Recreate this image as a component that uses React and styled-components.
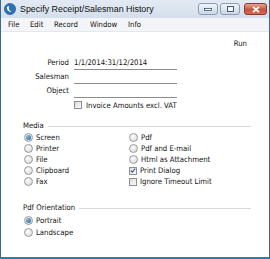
import React from 'react';
import styled, { createGlobalStyle, css } from 'styled-components';

const GlobalStyle = createGlobalStyle`
  html, body { margin: 0; padding: 0; background: #fff; }
  body { font-family: "DejaVu Sans Condensed", "DejaVu Sans", sans-serif; }
`;

const Window = styled.div`
  width: 270px;
  height: 259px;
  box-sizing: border-box;
  display: flex;
  flex-direction: column;
  border: 1px solid #3a6b8c;
  border-top: none;
  border-bottom: 2px solid #2c7fa5;
  background: #fff;
  overflow: hidden;
`;

const TitleBar = styled.div`
  height: 18px;
  display: flex;
  align-items: center;
  padding: 0 2px 0 3px;
  background: linear-gradient(#e3eaf3, #d4dfec);
`;

const Title = styled.div`
  flex: 1;
  margin-left: 4px;
  font-family: "Liberation Sans", sans-serif;
  font-size: 8.9px;
  color: #111;
  white-space: nowrap;
`;

const WinButton = styled.div`
  width: ${(p) => p.w}px;
  height: 12px;
  margin-left: ${(p) => p.gap}px;
  box-sizing: border-box;
  border: 1px solid #8a9db3;
  border-radius: 3px;
  display: flex;
  align-items: center;
  justify-content: center;
  background: linear-gradient(#eef3f9, #cbd8e7);
  ${(p) => p.close && css`
    border-color: #8b3a2e;
    background: linear-gradient(#e8a496, #c8553f 55%, #d06a52);
  `}
`;

const MenuBar = styled.div`
  height: 13px;
  display: flex;
  align-items: center;
  padding-left: 7px;
  background: #f3f5f8;
  border-bottom: 1px solid #e4e8ee;
  font-size: 7.7px;
  color: #111;
`;

const MenuItem = styled.span`
  width: ${(p) => p.w}px;
`;

const Content = styled.div`
  flex: 1;
  display: flex;
  flex-direction: column;
  font-size: 7.7px;
  color: #111;
`;

const RunRow = styled.div`
  display: flex;
  justify-content: flex-end;
  padding: 7px 22px 0 0;
  height: 10px;
  line-height: 10px;
`;

const Form = styled.div`
  display: grid;
  grid-template-columns: 68px 103px;
  column-gap: 5px;
  margin-top: 7px;
`;

const Label = styled.div`
  height: 14px;
  line-height: 13px;
  text-align: right;
`;

const Field = styled.div`
  height: 13px;
  line-height: 13px;
  border-bottom: 1px solid #8c8c8c;
  white-space: nowrap;
`;

const CheckRow = styled.label`
  grid-column: 2 / span 1;
  display: flex;
  align-items: center;
  gap: 4px;
  height: 14px;
  white-space: nowrap;
`;

const Box = styled.span`
  width: 8px;
  height: 8px;
  box-sizing: border-box;
  border: 1px solid #8f8f8f;
  background: linear-gradient(135deg, #dcdcdc, #fafafa);
  display: flex;
  align-items: center;
  justify-content: center;
  flex-shrink: 0;
`;

const Radio = styled.span`
  width: 9px;
  height: 9px;
  box-sizing: border-box;
  border-radius: 50%;
  border: 1px solid #9a9a9a;
  background: radial-gradient(circle at 40% 35%, #fdfdfd, #d4d4d4);
  display: flex;
  align-items: center;
  justify-content: center;
  flex-shrink: 0;
  &::after {
    content: '';
    display: ${(p) => (p.on ? 'block' : 'none')};
    width: 5px;
    height: 5px;
    border-radius: 50%;
    background: radial-gradient(circle at 35% 35%, #7fb6e6, #1e5f9e);
  }
`;

const Section = styled.div`
  margin: ${(p) => p.top}px 18px 0 22px;
`;

const SectionHead = styled.div`
  display: flex;
  align-items: center;
  gap: 4px;
  height: 10px;
  &::after {
    content: '';
    flex: 1;
    height: 1px;
    margin-top: 3px;
    background: #d3d8dc;
  }
`;

const OptionGrid = styled.div`
  display: grid;
  grid-template-columns: 105px 1fr;
  grid-auto-rows: 11px;
  margin-top: 2px;
  margin-left: 1px;
`;

const Option = styled.div`
  display: flex;
  align-items: center;
  gap: 3px;
  white-space: nowrap;
`;

const OptionList = styled.div`
  display: flex;
  flex-direction: column;
  margin-top: 2px;
  margin-left: 1px;
  & > div { height: 12px; }
`;

function Check({ on }) {
  return (
    <Box>
      {on && (
        <svg width="7" height="7" viewBox="0 0 7 7">
          <path d="M1 3.6 L2.8 5.4 L6 1.2" fill="none" stroke="#2d5f9e" strokeWidth="1.3" />
        </svg>
      )}
    </Box>
  );
}

function AppIcon() {
  return (
    <svg width="12" height="12" viewBox="0 0 12 12">
      <circle cx="6" cy="6" r="5.6" fill="#2a73b8" />
      <circle cx="6" cy="6" r="5.6" fill="none" stroke="#1b4f85" strokeWidth="0.6" />
      <path d="M3.2 3.5 C2 6.5 4.5 9.5 8.5 8.6 C5.5 8.4 4.2 6 5.2 3.2 Z" fill="#fff" />
    </svg>
  );
}

export default function App() {
  const leftMedia = [['Screen', true], ['Printer'], ['File'], ['Clipboard'], ['Fax']];
  const rightMedia = [
    ['Pdf', 'radio'],
    ['Pdf and E-mail', 'radio'],
    ['Html as Attachment', 'radio'],
    ['Print Dialog', 'check', true],
    ['Ignore Timeout Limit', 'check'],
  ];

  return (
    <>
      <GlobalStyle />
      <Window>
        <TitleBar>
          <AppIcon />
          <Title>Specify Receipt/Salesman History</Title>
          <WinButton w={20} gap={0}>
            <svg width="8" height="3" viewBox="0 0 8 3">
              <rect x="0.5" y="0.5" width="7" height="2" fill="#fff" stroke="#3b4f66" strokeWidth="0.8" />
            </svg>
          </WinButton>
          <WinButton w={20} gap={2}>
            <svg width="7" height="6" viewBox="0 0 7 6">
              <rect x="0.5" y="0.5" width="6" height="5" fill="none" stroke="#3b4f66" strokeWidth="0.9" />
              <rect x="1.5" y="1.8" width="4" height="2.7" fill="#fff" />
            </svg>
          </WinButton>
          <WinButton w={23} gap={4} close>
            <svg width="8" height="7" viewBox="0 0 8 7">
              <path d="M1 0.8 L7 6.2 M7 0.8 L1 6.2" stroke="#fff" strokeWidth="1.8" />
            </svg>
          </WinButton>
        </TitleBar>
        <MenuBar>
          <MenuItem w={22}>File</MenuItem>
          <MenuItem w={24}>Edit</MenuItem>
          <MenuItem w={36}>Record</MenuItem>
          <MenuItem w={38}>Window</MenuItem>
          <MenuItem w={20}>Info</MenuItem>
        </MenuBar>
        <Content>
          <RunRow>Run</RunRow>
          <Form>
            <Label>Period</Label>
            <Field>1/1/2014:31/12/2014</Field>
            <Label>Salesman</Label>
            <Field />
            <Label>Object</Label>
            <Field />
            <CheckRow>
              <Check />
              Invoice Amounts excl. VAT
            </CheckRow>
          </Form>
          <Section top={8}>
            <SectionHead>Media</SectionHead>
            <OptionGrid>
              {leftMedia.map(([name, on], i) => (
                <React.Fragment key={name}>
                  <Option style={{ gridColumn: 1, gridRow: i + 1 }}>
                    <Radio on={on} />
                    {name}
                  </Option>
                  <Option style={{ gridColumn: 2, gridRow: i + 1 }}>
                    {rightMedia[i][1] === 'radio' ? <Radio /> : <Check on={rightMedia[i][2]} />}
                    {rightMedia[i][0]}
                  </Option>
                </React.Fragment>
              ))}
            </OptionGrid>
          </Section>
          <Section top={15}>
            <SectionHead>Pdf Orientation</SectionHead>
            <OptionList>
              <Option>
                <Radio on />
                Portrait
              </Option>
              <Option>
                <Radio />
                Landscape
              </Option>
            </OptionList>
          </Section>
        </Content>
      </Window>
    </>
  );
}
